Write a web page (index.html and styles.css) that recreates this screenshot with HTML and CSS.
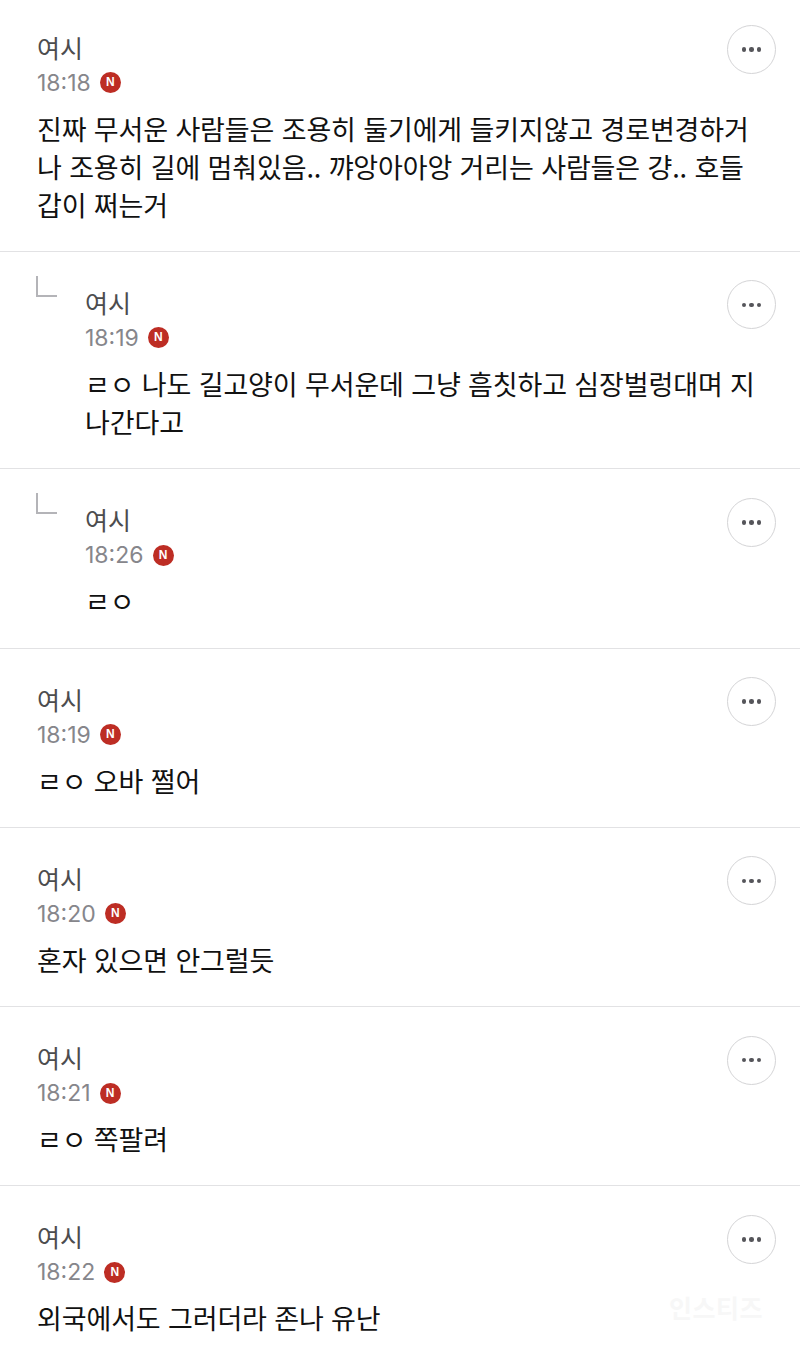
FILE: index.html
```html
<!DOCTYPE html>
<html lang="ko">
<head>
  <meta charset="UTF-8">
  <meta name="viewport" content="width=device-width, initial-scale=1.0">
  <title>댓글</title>
  <link rel="stylesheet" href="styles.css">
</head>
<body>
  <div class="comments">
    <div class="comment first">
      <div class="comment-head">
        <div>
          <div class="name">여시</div>
          <div class="meta"><span class="time">18:18</span><span class="badge">N</span></div>
        </div>
        <button class="more"><i></i><i></i><i></i></button>
      </div>
      <p class="text">진짜 무서운 사람들은 조용히 둘기에게 들키지않고 경로변경하거나 조용히 길에 멈춰있음.. 꺄앙아아앙 거리는 사람들은 걍.. 호들갑이 쩌는거</p>
    </div>

    <div class="comment reply">
      <span class="reply-mark"></span>
      <div class="comment-head">
        <div>
          <div class="name">여시</div>
          <div class="meta"><span class="time">18:19</span><span class="badge">N</span></div>
        </div>
        <button class="more"><i></i><i></i><i></i></button>
      </div>
      <p class="text">ㄹㅇ 나도 길고양이 무서운데 그냥 흠칫하고 심장벌렁대며 지나간다고</p>
    </div>

    <div class="comment reply">
      <span class="reply-mark"></span>
      <div class="comment-head">
        <div>
          <div class="name">여시</div>
          <div class="meta"><span class="time">18:26</span><span class="badge">N</span></div>
        </div>
        <button class="more"><i></i><i></i><i></i></button>
      </div>
      <p class="text">ㄹㅇ</p>
    </div>

    <div class="comment">
      <div class="comment-head">
        <div>
          <div class="name">여시</div>
          <div class="meta"><span class="time">18:19</span><span class="badge">N</span></div>
        </div>
        <button class="more"><i></i><i></i><i></i></button>
      </div>
      <p class="text">ㄹㅇ 오바 쩔어</p>
    </div>

    <div class="comment">
      <div class="comment-head">
        <div>
          <div class="name">여시</div>
          <div class="meta"><span class="time">18:20</span><span class="badge">N</span></div>
        </div>
        <button class="more"><i></i><i></i><i></i></button>
      </div>
      <p class="text">혼자 있으면 안그럴듯</p>
    </div>

    <div class="comment">
      <div class="comment-head">
        <div>
          <div class="name">여시</div>
          <div class="meta"><span class="time">18:21</span><span class="badge">N</span></div>
        </div>
        <button class="more"><i></i><i></i><i></i></button>
      </div>
      <p class="text">ㄹㅇ 쪽팔려</p>
    </div>

    <div class="comment">
      <div class="comment-head">
        <div>
          <div class="name">여시</div>
          <div class="meta"><span class="time">18:22</span><span class="badge">N</span></div>
        </div>
        <button class="more"><i></i><i></i><i></i></button>
      </div>
      <p class="text">외국에서도 그러더라 존나 유난</p>
    </div>
  </div>
  <div class="watermark">인스티즈</div>
</body>
</html>
```

FILE: styles.css
```css
html, body {
  margin: 0;
  height: 100%;
}
body {
  background: #fff;
  font-family: "Noto Sans CJK KR", "Noto Sans", sans-serif;
  overflow: hidden;
  position: relative;
}
.comment {
  position: relative;
  padding: 36px 40px 27.3px 37px;
  border-bottom: 1px solid #e2e2e4;
}
.comment.first {
  padding-top: 32.7px;
}
.comment.reply {
  padding-left: 85px;
}
.comment-head {
  display: flex;
  justify-content: space-between;
  align-items: flex-start;
}
.name {
  height: 29px;
  line-height: 29px;
  font-size: 25px;
  color: #4c4c4e;
}
.meta {
  display: flex;
  align-items: center;
  height: 30px;
  margin-top: 6px;
}
.time {
  font-family: "Inter", "Liberation Sans", sans-serif;
  font-size: 23px;
  color: #86868b;
}
.badge {
  width: 21px;
  height: 21px;
  margin-left: 9px;
  border-radius: 50%;
  background: #bd2d24;
  color: #fff;
  font-family: "Liberation Sans", sans-serif;
  font-size: 12px;
  font-weight: bold;
  line-height: 21px;
  text-align: center;
}
.more {
  display: flex;
  align-items: center;
  justify-content: center;
  gap: 3px;
  width: 49px;
  height: 49px;
  margin: -7.5px -16px 0 0;
  padding: 0;
  border: 1px solid #d4d4d6;
  border-radius: 50%;
  background: #fff;
}
.more i {
  width: 4.5px;
  height: 4.5px;
  border-radius: 50%;
  background: #55555a;
}
.text {
  margin: 12px 0 0;
  font-size: 27px;
  letter-spacing: -0.13px;
  line-height: 38px;
  color: #111;
}
.reply-mark {
  position: absolute;
  left: 36px;
  top: 24px;
  width: 19px;
  height: 19px;
  border-left: 2px solid #b4b4b8;
  border-bottom: 2px solid #b4b4b8;
}
.watermark {
  position: absolute;
  left: 669px;
  top: 1291px;
  font-size: 25px;
  font-weight: 700;
  letter-spacing: 0.5px;
  line-height: 32px;
  color: #f7f7f7;
}
```
